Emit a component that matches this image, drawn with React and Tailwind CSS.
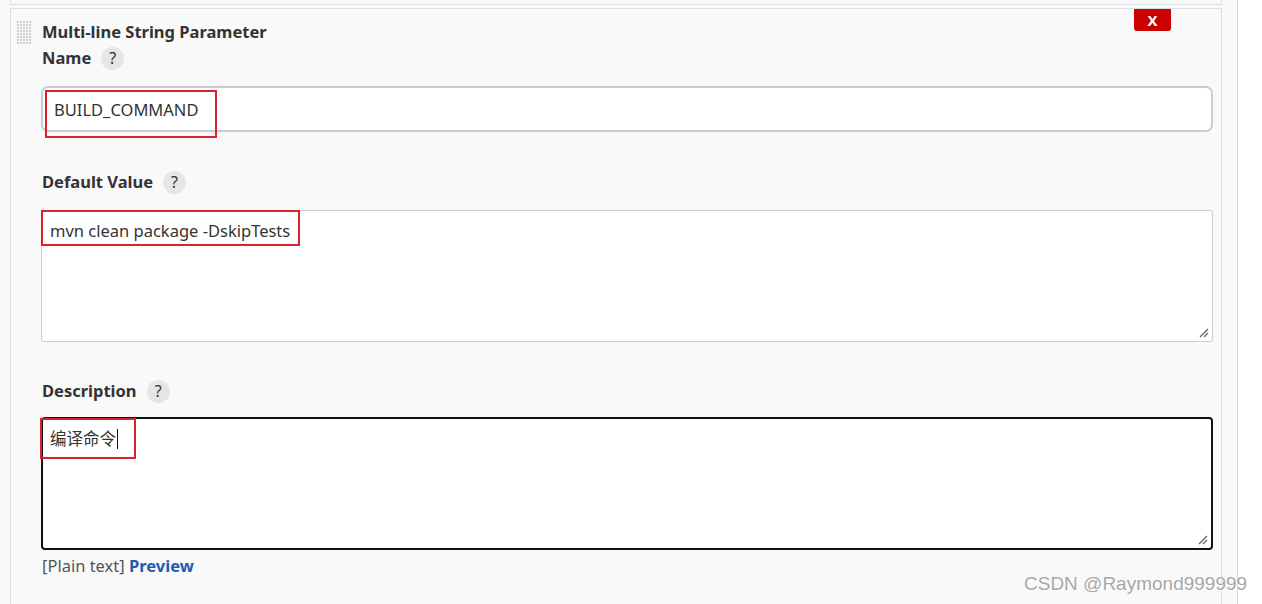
import React from 'react';

const font = { fontFamily: '"Noto Sans", "Open Sans", "Noto Sans CJK SC", sans-serif' };

function Help({ className = '' }) {
  return (
    <span className={`inline-flex h-[23px] w-[23px] items-center justify-center rounded-full bg-[#e6e6e6] text-[16px] font-normal text-[#333] ${className}`}>
      ?
    </span>
  );
}

function DragHandle() {
  return (
    <svg width="15" height="25" viewBox="0 0 15 25" className="mt-[2px] shrink-0">
      {Array.from({ length: 8 }).map((_, r) =>
        Array.from({ length: 5 }).map((_, c) => (
          <rect key={`${r}-${c}`} x={c * 3} y={r * 3} width="2" height="2" fill="#cfcfcf" />
        ))
      )}
    </svg>
  );
}

function Grip() {
  return (
    <svg width="10" height="10" viewBox="0 0 10 10" className="absolute bottom-[3px] right-[3px]">
      <path d="M1 9 L9 1 M5 9 L9 5" stroke="#666" strokeWidth="1.3" />
    </svg>
  );
}

export default function App() {
  return (
    <div className="flex h-[604px] w-[1262px] overflow-hidden bg-white" style={font}>
      <div className="flex w-[1238px] flex-col border-r border-[#d5d8dc] bg-[#f9f9f9] pl-[10px] pr-[15px]">
        <div className="h-[5px] border-b border-l border-r border-[#dcdfe3]" />
        <div className="relative mt-[3px] flex-1 border-l border-r border-t border-[#dcdfe3] pl-[6px] pr-[8px]">
          <div className="absolute right-[50px] top-0 flex h-[22px] w-[37px] items-center justify-center rounded-b-[3px] bg-[#cc0000] text-[15px] font-bold text-white">
            X
          </div>
          <div className="flex gap-[10px] pt-[10px]">
            <DragHandle />
            <div className="flex-1">
              <div className="text-[16.5px] font-bold leading-[26px] text-[#333]">Multi-line String Parameter</div>
              <div className="flex items-center gap-[10px] text-[16.5px] font-bold leading-[26px] text-[#333]">
                Name <Help />
              </div>

              <div className="relative -ml-[1px] mt-[15px] flex h-[46px] items-center rounded-[7px] border-2 border-[#c6cdd4] bg-white pl-[11px] pt-[2px] text-[16.5px] text-[#333]">
                BUILD_COMMAND
                <div className="absolute left-[2px] top-[2px] h-[48px] w-[172px] border-2 border-[#d8232a]" />
              </div>

              <div className="mt-[37px] flex items-center gap-[10px] text-[16.5px] font-bold leading-[26px] text-[#333]">
                Default Value <Help />
              </div>
              <div className="relative -ml-[1px] mt-[15px] h-[132px] rounded-[3px] border border-[#c6cdd4] bg-white px-[8px] pt-[8px] text-[16.5px] leading-[24px] text-[#333]">
                mvn clean package -DskipTests
                <div className="absolute -left-[1px] -top-[1px] h-[36px] w-[259px] border-2 border-[#d8232a]" />
                <Grip />
              </div>

              <div className="mt-[36px] flex items-center gap-[10px] text-[16.5px] font-bold leading-[26px] text-[#333]">
                Description <Help />
              </div>
              <div className="relative -ml-[1px] mt-[13px] h-[133px] rounded-[4px] border-2 border-[#111] bg-white px-[7px] pt-[6px] text-[16.5px] leading-[28px] text-[#333]">
                编译命令<span className="ml-[1px] inline-block h-[20px] w-[1px] translate-y-[4px] bg-[#111]" />
                <div className="absolute -left-[3px] -top-[1px] h-[41px] w-[96px] border-2 border-[#d8232a]" />
                <Grip />
              </div>
              <div className="mt-[4px] text-[16.5px] leading-[24px] text-[#555]">
                [Plain text] <span className="font-bold text-[#1f5bb0]">Preview</span>
              </div>
            </div>
          </div>
        </div>
      </div>
      <div className="pointer-events-none absolute left-[1024px] top-[570px] text-[19px] text-[#a8a8a8]" style={{ fontFamily: '"Liberation Sans", Arial, sans-serif', textShadow: '1px 1px 0 #fff' }}>
        CSDN @Raymond999999
      </div>
    </div>
  );
}
